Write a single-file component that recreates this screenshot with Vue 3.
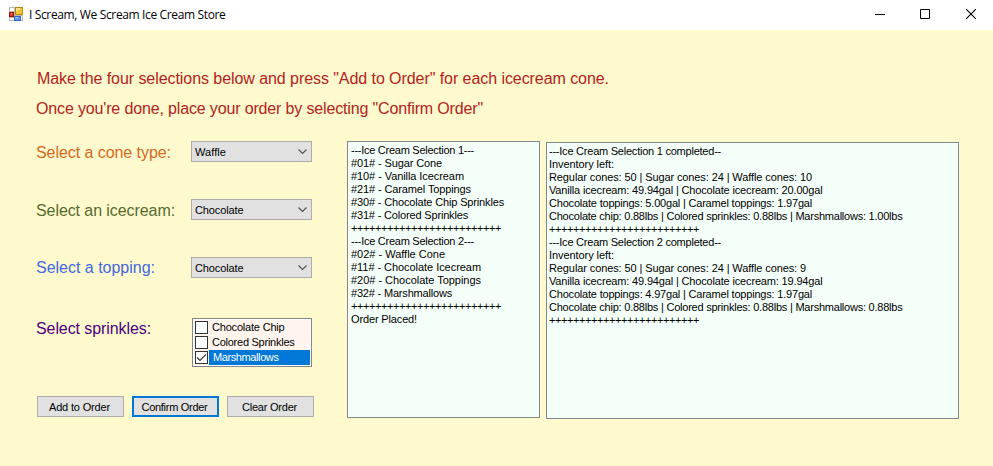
<script setup>
const intro = [
  { text: 'Make the four selections below and press "Add to Order" for each icecream cone.', width: 572 },
  { text: 'Once you\'re done, place your order by selecting "Confirm Order"', width: 447 },
]

const selects = [
  { label: 'Select a cone type:', width: 135, tone: 'cone', value: 'Waffle', valueWidth: 31 },
  { label: 'Select an icecream:', width: 139, tone: 'cream', value: 'Chocolate', valueWidth: 48.5 },
  { label: 'Select a topping:', width: 119, tone: 'topping', value: 'Chocolate', valueWidth: 48.5 },
]

const sprinkles = [
  { text: 'Chocolate Chip', width: 72.5, checked: false },
  { text: 'Colored Sprinkles', width: 82.5, checked: false },
  { text: 'Marshmallows', width: 65.5, checked: true },
]

const buttons = [
  { text: 'Add to Order', width: 61, active: false },
  { text: 'Confirm Order', width: 66, active: true },
  { text: 'Clear Order', width: 55, active: false },
]

const divider = '+'.repeat(25)

const order = [
  ['---Ice Cream Selection 1---', 123],
  ['#01# - Sugar Cone', 91],
  ['#10# - Vanilla Icecream', 113],
  ['#21# - Caramel Toppings', 120],
  ['#30# - Chocolate Chip Sprinkles', 153],
  ['#31# - Colored Sprinkles', 117],
  [divider, 150],
  ['---Ice Cream Selection 2---', 123],
  ['#02# - Waffle Cone', 94],
  ['#11# - Chocolate Icecream', 130],
  ['#20# - Chocolate Toppings', 130],
  ['#32# - Marshmallows', 101],
  [divider, 150],
  ['Order Placed!', 66],
]

const inventory = [
  ['---Ice Cream Selection 1 completed--', 172],
  ['Inventory left:', 65],
  ['Regular cones: 50 | Sugar cones: 24 | Waffle cones: 10', 263],
  ['Vanilla icecream: 49.94gal | Chocolate icecream: 20.00gal', 273.5],
  ['Chocolate toppings: 5.00gal | Caramel toppings: 1.97gal', 263],
  ['Chocolate chip: 0.88lbs | Colored sprinkles: 0.88lbs | Marshmallows: 1.00lbs', 353.5],
  [divider, 150],
  ['---Ice Cream Selection 2 completed--', 172],
  ['Inventory left:', 65],
  ['Regular cones: 50 | Sugar cones: 24 | Waffle cones: 9', 257],
  ['Vanilla icecream: 49.94gal | Chocolate icecream: 19.94gal', 273.5],
  ['Chocolate toppings: 4.97gal | Caramel toppings: 1.97gal', 263],
  ['Chocolate chip: 0.88lbs | Colored sprinkles: 0.88lbs | Marshmallows: 0.88lbs', 353.5],
  [divider, 150],
]

// Tracks a single line of text so that it spans the given number of pixels.
const vTrack = {
  mounted(el, { value }) {
    const natural = el.getBoundingClientRect().width
    el.style.letterSpacing = `${(value - natural) / el.textContent.length}px`
  },
}
</script>

<template>
  <div class="window">
    <header class="titlebar">
      <svg class="app-icon" width="14" height="14" viewBox="0 0 14 14" shape-rendering="crispEdges">
        <rect width="14" height="14" fill="#b9b9b9" />
        <path d="M1 1h4v3H1zM1 11h4v2H1zM12 9h1v4h-1z" fill="#fff" />
        <rect x="0" y="5" width="5" height="5" fill="#9c1410" />
        <rect x="1" y="6" width="3" height="3" fill="#d8402c" />
        <rect x="2" y="6" width="1" height="1" fill="#f5a08c" />
        <rect x="6" y="0" width="8" height="8" fill="#b98a10" />
        <rect x="7" y="1" width="6" height="6" fill="#f7c62f" />
        <path d="M7 1h4v2H9v1H7z" fill="#ffe58a" />
        <rect x="5" y="9" width="7" height="5" fill="#3569c5" />
        <rect x="6" y="10" width="5" height="3" fill="#6698ec" />
        <rect x="6" y="10" width="3" height="1" fill="#a5c5fa" />
      </svg>
      <h1 class="title"><span v-track="196.5">I Scream, We Scream Ice Cream Store</span></h1>
      <div class="controls">
        <svg width="10" height="10" viewBox="0 0 10 10" shape-rendering="crispEdges"><path d="M0 5h10v1H0z" /></svg>
        <svg width="10" height="10" viewBox="0 0 10 10"><path d="M.5.5h9v9h-9z" fill="none" stroke="#000" /></svg>
        <svg class="close" width="10" height="10" viewBox="0 0 10 10"><path d="M0 0l10 10M10 0L0 10" stroke="#000" stroke-width="1.1" /></svg>
      </div>
    </header>

    <main class="form">
      <div class="intro">
        <p v-for="line in intro" :key="line.text"><span v-track="line.width">{{ line.text }}</span></p>
      </div>
      <div class="columns">
        <section class="choices">
          <div v-for="s in selects" :key="s.label" class="field">
            <label class="label" :class="s.tone"><span v-track="s.width">{{ s.label }}</span></label>
            <div class="combo">
              <span v-track="s.valueWidth">{{ s.value }}</span>
              <svg width="9" height="6" viewBox="0 0 9 6"><path d="M.5.5l4 4 4-4" fill="none" stroke="#555" stroke-width="1.2" /></svg>
            </div>
          </div>
          <div class="field sprinkle-field">
            <label class="label sprinkle"><span v-track="115">Select sprinkles:</span></label>
            <ul class="checklist">
              <li v-for="item in sprinkles" :key="item.text" :class="{ selected: item.checked }">
                <span class="box">
                  <svg v-if="item.checked" width="11" height="11" viewBox="0 0 11 11"><path d="M1 5.5l3 3L10 2.3" fill="none" stroke="#333" stroke-width="1.2" /></svg>
                </span>
                <span class="item"><span v-track="item.width">{{ item.text }}</span></span>
              </li>
            </ul>
          </div>
          <div class="buttons">
            <button v-for="b in buttons" :key="b.text" :class="{ active: b.active }"><span v-track="b.width">{{ b.text }}</span></button>
          </div>
        </section>
        <section class="log order">
          <p v-for="([text, width], i) in order" :key="i"><span v-track="width">{{ text }}</span></p>
        </section>
        <section class="log inventory">
          <p v-for="([text, width], i) in inventory" :key="i"><span v-track="width">{{ text }}</span></p>
        </section>
      </div>
    </main>
  </div>
</template>

<style>
body { margin: 0; background: #fffacd; overflow: hidden; }
</style>

<style scoped>
* { box-sizing: border-box; }
.window {
  width: 993px;
  height: 466px;
  display: flex;
  flex-direction: column;
  background: #fffacd;
  color: #000;
  font: 11px/13px "Liberation Sans", Arial, sans-serif;
  white-space: pre;
}
p, ul, h1 { margin: 0; padding: 0; }
.titlebar {
  height: 30px;
  flex: none;
  display: flex;
  align-items: center;
  padding: 0 17px 0 9px;
  background: #fff;
}
.app-icon { margin-top: -2px; }
.title { margin-left: 6px; font: 12px/16px "Open Sans", "Noto Sans", sans-serif; }
.controls { margin-left: auto; display: flex; gap: 35px; padding-bottom: 2px; }
.controls svg { display: block; }
.controls .close { margin-left: 1px; }
.form { padding: 34px 0 0 36px; }
.intro { height: 77px; color: #b22222; font-size: 16px; line-height: 30px; }
.intro p:first-child { padding-left: 1px; }
.columns { display: flex; align-items: flex-start; }
.choices { width: 311px; }
.field { display: flex; height: 58px; align-items: flex-start; }
.label { width: 155px; font-size: 16px; line-height: 23px; }
.cone { color: #d2691e; }
.cream { color: #556b2f; }
.topping { color: #4169e1; line-height: 21px; }
.sprinkle { color: #4b0082; line-height: 21px; }
.combo {
  width: 121px;
  height: 21px;
  display: flex;
  align-items: center;
  justify-content: space-between;
  padding: 1px 4px 0 3px;
  border: 1px solid #adadad;
  background: #e1e1e1;
}
.sprinkle-field { height: 81px; padding-top: 3px; }
.checklist {
  width: 120px;
  height: 49px;
  margin-left: 1px;
  padding: 1px;
  border: 1px solid #828790;
  background: #fff;
  list-style: none;
}
.checklist li { display: flex; align-items: center; height: 15px; padding-left: 1px; background: #fff5ee; }
.box { width: 13px; height: 13px; flex: none; border: 1px solid #333; background: #fff; }
.box svg { display: block; }
.item { flex: 1; height: 15px; line-height: 15px; margin-left: 1px; padding-left: 3px; }
.selected .item { padding-left: 4px; background: #0078d7; color: #fff; }
.buttons { display: flex; gap: 8px; padding-left: 1px; }
button {
  width: 87px;
  height: 21px;
  padding: 1px 2px 0 0;
  border: 1px solid #adadad;
  background: #e1e1e1;
  color: #000;
  font: inherit;
  text-align: center;
}
button.active { border: 2px solid #0078d7; }
.log { height: 277px; padding: 2px 3px; border: 1px solid #828790; background: #f5fffa; }
.order { width: 193px; }
.inventory { width: 413px; margin: 1px 0 0 6px; padding-left: 2px; }
</style>
